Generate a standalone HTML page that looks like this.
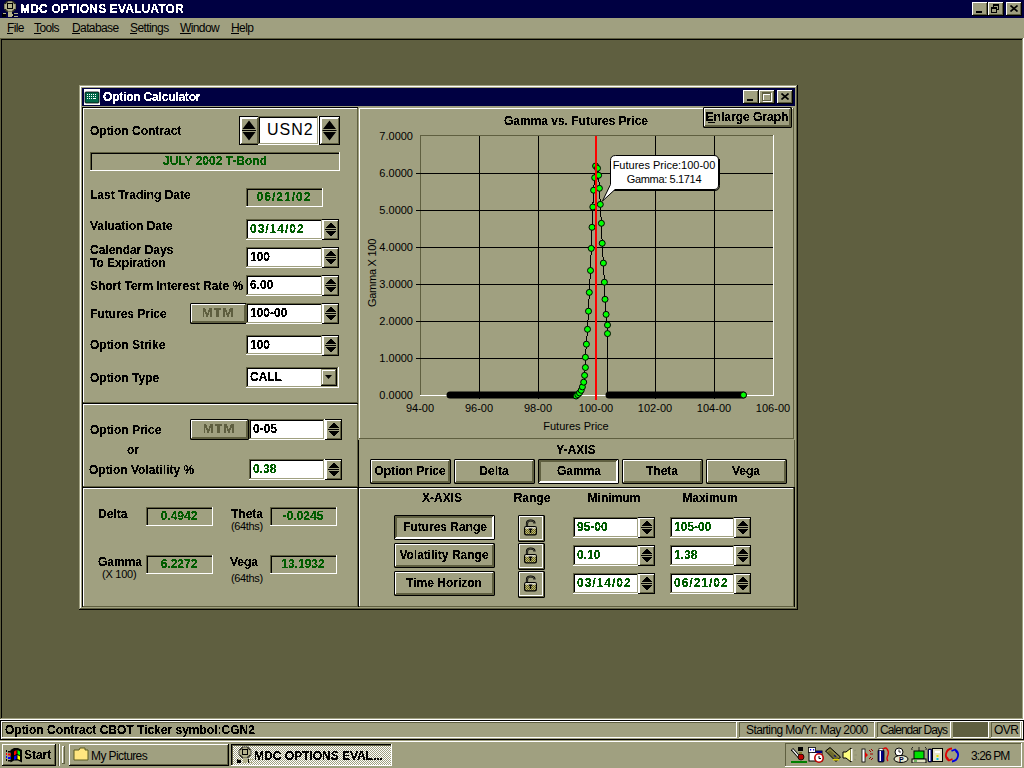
<!DOCTYPE html>
<html><head><meta charset="utf-8"><style>
html,body{margin:0;padding:0;}
body{width:1024px;height:768px;overflow:hidden;position:relative;background:#5f5f40;font-family:"Liberation Sans",sans-serif;}
body div{position:absolute;box-sizing:border-box;}
.t{white-space:pre;line-height:normal;}
.b{filter:url(#crisp);}
svg{position:absolute;}
</style></head><body>
<svg width="0" height="0" style="position:absolute;left:0;top:0"><filter id="crisp" x="0" y="0" width="100%" height="100%"><feComponentTransfer><feFuncA type="discrete" tableValues="0 0 1 1 1"/></feComponentTransfer></filter></svg>
<div style="left:0px;top:0px;width:1024px;height:18px;background:#000042"></div>
<div class="t b" style="left:20px;top:2px;font-size:12px;font-weight:bold;color:#ffffff;letter-spacing:0.15px">MDC OPTIONS EVALUATOR</div>
<svg style="left:0px;top:0px" width="20" height="18" viewBox="0 0 20 18"><path d="M7 1 H13 L16 4 V9 L13 12 H7 L4 9 V4 Z" fill="#b4b28c" stroke="#000" stroke-width="0.6"/><rect x="7.5" y="3.5" width="5" height="5" fill="none" stroke="#000" stroke-width="1"/><path d="M5 4 L8 1.5 M12 1.5 L15 4 M5 9 L8 11.5 M12 11.5 L15 9" stroke="#000" stroke-width="0.9"/><rect x="8" y="12" width="4" height="5" fill="#b4b28c"/><rect x="2" y="13" width="4" height="4" fill="#000"/><rect x="3" y="13" width="3" height="1" fill="#b4b28c"/><rect x="12" y="14" width="2" height="2" fill="#b4b28c"/><rect x="14" y="13" width="4" height="1" fill="#b4b28c"/><rect x="14" y="16" width="4" height="1" fill="#b4b28c"/><rect x="13" y="13" width="1" height="4" fill="#000"/></svg>
<div style="left:972px;top:2px;width:16px;height:14px;background:#a0a080"></div>
<div style="left:972px;top:2px;width:16px;height:1px;background:#ffffff"></div>
<div style="left:972px;top:2px;width:1px;height:14px;background:#ffffff"></div>
<div style="left:972px;top:15px;width:16px;height:1px;background:#000000"></div>
<div style="left:987px;top:2px;width:1px;height:14px;background:#000000"></div>
<div style="left:973px;top:3px;width:14px;height:1px;background:#a0a080"></div>
<div style="left:973px;top:3px;width:1px;height:12px;background:#a0a080"></div>
<div style="left:973px;top:14px;width:14px;height:1px;background:#5f5f40"></div>
<div style="left:986px;top:3px;width:1px;height:12px;background:#5f5f40"></div>
<div style="left:976px;top:11px;width:6px;height:2px;background:#000000"></div>
<div style="left:988px;top:2px;width:16px;height:14px;background:#a0a080"></div>
<div style="left:988px;top:2px;width:16px;height:1px;background:#ffffff"></div>
<div style="left:988px;top:2px;width:1px;height:14px;background:#ffffff"></div>
<div style="left:988px;top:15px;width:16px;height:1px;background:#000000"></div>
<div style="left:1003px;top:2px;width:1px;height:14px;background:#000000"></div>
<div style="left:989px;top:3px;width:14px;height:1px;background:#a0a080"></div>
<div style="left:989px;top:3px;width:1px;height:12px;background:#a0a080"></div>
<div style="left:989px;top:14px;width:14px;height:1px;background:#5f5f40"></div>
<div style="left:1002px;top:3px;width:1px;height:12px;background:#5f5f40"></div>
<div style="left:993px;top:4px;width:6px;height:6px;border:1px solid #000;border-top-width:2px"></div>
<div style="left:991px;top:7px;width:6px;height:6px;border:1px solid #000;border-top-width:2px;background:#a0a080"></div>
<div style="left:1006px;top:2px;width:16px;height:14px;background:#a0a080"></div>
<div style="left:1006px;top:2px;width:16px;height:1px;background:#ffffff"></div>
<div style="left:1006px;top:2px;width:1px;height:14px;background:#ffffff"></div>
<div style="left:1006px;top:15px;width:16px;height:1px;background:#000000"></div>
<div style="left:1021px;top:2px;width:1px;height:14px;background:#000000"></div>
<div style="left:1007px;top:3px;width:14px;height:1px;background:#a0a080"></div>
<div style="left:1007px;top:3px;width:1px;height:12px;background:#a0a080"></div>
<div style="left:1007px;top:14px;width:14px;height:1px;background:#5f5f40"></div>
<div style="left:1020px;top:3px;width:1px;height:12px;background:#5f5f40"></div>
<svg style="left:1010px;top:5px" width="8" height="7" viewBox="0 0 8 7"><path d="M0.5 0.5 L7.5 6.5 M7.5 0.5 L0.5 6.5" stroke="#000" stroke-width="1.6"/></svg>
<div style="left:0px;top:18px;width:1024px;height:20px;background:#a0a080"></div>
<div class="t" style="left:7px;top:21px;font-size:12px;font-weight:normal;color:#000000;letter-spacing:-0.6px">File</div>
<div class="t" style="left:34px;top:21px;font-size:12px;font-weight:normal;color:#000000;letter-spacing:-0.6px">Tools</div>
<div class="t" style="left:72px;top:21px;font-size:12px;font-weight:normal;color:#000000;letter-spacing:-0.6px">Database</div>
<div class="t" style="left:130px;top:21px;font-size:12px;font-weight:normal;color:#000000;letter-spacing:-0.6px">Settings</div>
<div class="t" style="left:180px;top:21px;font-size:12px;font-weight:normal;color:#000000;letter-spacing:-0.6px">Window</div>
<div class="t" style="left:231px;top:21px;font-size:12px;font-weight:normal;color:#000000;letter-spacing:-0.6px">Help</div>
<div style="left:7px;top:33px;width:6px;height:1px;background:#000000"></div>
<div style="left:34px;top:33px;width:7px;height:1px;background:#000000"></div>
<div style="left:72px;top:33px;width:8px;height:1px;background:#000000"></div>
<div style="left:130px;top:33px;width:7px;height:1px;background:#000000"></div>
<div style="left:180px;top:33px;width:11px;height:1px;background:#000000"></div>
<div style="left:231px;top:33px;width:8px;height:1px;background:#000000"></div>
<div style="left:0px;top:38px;width:1024px;height:1px;background:#5f5f40"></div>
<div style="left:0px;top:38px;width:1px;height:681px;background:#5f5f40"></div>
<div style="left:1px;top:39px;width:1022px;height:1px;background:#000000"></div>
<div style="left:1px;top:39px;width:1px;height:679px;background:#000000"></div>
<div style="left:1023px;top:38px;width:1px;height:682px;background:#ffffff"></div>
<div style="left:1022px;top:39px;width:1px;height:680px;background:#a0a080"></div>
<div style="left:0px;top:719px;width:1024px;height:1px;background:#ffffff"></div>
<div style="left:1px;top:718px;width:1022px;height:1px;background:#a0a080"></div>
<div style="left:79px;top:85px;width:719px;height:525px;background:#a0a080"></div>
<div style="left:79px;top:85px;width:719px;height:1px;background:#a0a080"></div>
<div style="left:79px;top:85px;width:1px;height:525px;background:#a0a080"></div>
<div style="left:79px;top:609px;width:719px;height:1px;background:#000000"></div>
<div style="left:797px;top:85px;width:1px;height:525px;background:#000000"></div>
<div style="left:80px;top:86px;width:717px;height:1px;background:#ffffff"></div>
<div style="left:80px;top:86px;width:1px;height:523px;background:#ffffff"></div>
<div style="left:80px;top:608px;width:717px;height:1px;background:#5f5f40"></div>
<div style="left:796px;top:86px;width:1px;height:523px;background:#5f5f40"></div>
<div style="left:82px;top:88px;width:713px;height:18px;background:#000042"></div>
<div class="t b" style="left:103px;top:90px;font-size:12px;font-weight:bold;color:#ffffff;letter-spacing:-0.2px">Option Calculator</div>
<svg style="left:84px;top:89px" width="16" height="16" viewBox="0 0 16 16"><rect x="0" y="0" width="16" height="16" fill="#fff"/><rect x="1" y="3" width="14" height="11" rx="1" fill="#006848" stroke="#000" stroke-width="0.8"/><g fill="#fff"><rect x="3" y="5" width="1" height="1"/><rect x="5" y="5" width="1" height="1"/><rect x="7" y="5" width="1" height="1"/><rect x="9" y="5" width="1" height="1"/><rect x="11" y="5" width="1" height="1"/><rect x="3" y="7" width="1" height="1"/><rect x="5" y="7" width="1" height="1"/><rect x="7" y="7" width="1" height="1"/><rect x="9" y="7" width="1" height="1"/><rect x="11" y="7" width="1" height="1"/><rect x="3" y="9" width="1" height="1"/><rect x="5" y="9" width="1" height="1"/><rect x="7" y="9" width="1" height="1"/><rect x="9" y="9" width="3" height="1"/></g></svg>
<div style="left:743px;top:90px;width:16px;height:14px;background:#a0a080"></div>
<div style="left:743px;top:90px;width:16px;height:1px;background:#ffffff"></div>
<div style="left:743px;top:90px;width:1px;height:14px;background:#ffffff"></div>
<div style="left:743px;top:103px;width:16px;height:1px;background:#000000"></div>
<div style="left:758px;top:90px;width:1px;height:14px;background:#000000"></div>
<div style="left:744px;top:91px;width:14px;height:1px;background:#a0a080"></div>
<div style="left:744px;top:91px;width:1px;height:12px;background:#a0a080"></div>
<div style="left:744px;top:102px;width:14px;height:1px;background:#5f5f40"></div>
<div style="left:757px;top:91px;width:1px;height:12px;background:#5f5f40"></div>
<div style="left:747px;top:99px;width:6px;height:2px;background:#000000"></div>
<div style="left:759px;top:90px;width:16px;height:14px;background:#a0a080"></div>
<div style="left:759px;top:90px;width:16px;height:1px;background:#ffffff"></div>
<div style="left:759px;top:90px;width:1px;height:14px;background:#ffffff"></div>
<div style="left:759px;top:103px;width:16px;height:1px;background:#000000"></div>
<div style="left:774px;top:90px;width:1px;height:14px;background:#000000"></div>
<div style="left:760px;top:91px;width:14px;height:1px;background:#a0a080"></div>
<div style="left:760px;top:91px;width:1px;height:12px;background:#a0a080"></div>
<div style="left:760px;top:102px;width:14px;height:1px;background:#5f5f40"></div>
<div style="left:773px;top:91px;width:1px;height:12px;background:#5f5f40"></div>
<div style="left:763px;top:93px;width:9px;height:9px;border:1px solid #fff;border-top-width:2px"></div>
<div style="left:762px;top:92px;width:9px;height:9px;border:1px solid #5f5f40;border-top-width:2px"></div>
<div style="left:777px;top:90px;width:16px;height:14px;background:#a0a080"></div>
<div style="left:777px;top:90px;width:16px;height:1px;background:#ffffff"></div>
<div style="left:777px;top:90px;width:1px;height:14px;background:#ffffff"></div>
<div style="left:777px;top:103px;width:16px;height:1px;background:#000000"></div>
<div style="left:792px;top:90px;width:1px;height:14px;background:#000000"></div>
<div style="left:778px;top:91px;width:14px;height:1px;background:#a0a080"></div>
<div style="left:778px;top:91px;width:1px;height:12px;background:#a0a080"></div>
<div style="left:778px;top:102px;width:14px;height:1px;background:#5f5f40"></div>
<div style="left:791px;top:91px;width:1px;height:12px;background:#5f5f40"></div>
<svg style="left:781px;top:93px" width="8" height="7" viewBox="0 0 8 7"><path d="M0.5 0.5 L7.5 6.5 M7.5 0.5 L0.5 6.5" stroke="#000" stroke-width="1.6"/></svg>
<div style="left:82px;top:107px;width:276px;height:1px;background:#000000"></div>
<div style="left:82px;top:107px;width:1px;height:296px;background:#000000"></div>
<div style="left:83px;top:108px;width:274px;height:1px;background:#ffffff"></div>
<div style="left:83px;top:108px;width:1px;height:295px;background:#ffffff"></div>
<div style="left:83px;top:402px;width:275px;height:1px;background:#5f5f40"></div>
<div style="left:357px;top:108px;width:1px;height:295px;background:#5f5f40"></div>
<div style="left:82px;top:403px;width:276px;height:1px;background:#000000"></div>
<div style="left:82px;top:403px;width:1px;height:84px;background:#000000"></div>
<div style="left:83px;top:404px;width:274px;height:1px;background:#ffffff"></div>
<div style="left:83px;top:404px;width:1px;height:83px;background:#ffffff"></div>
<div style="left:83px;top:486px;width:275px;height:1px;background:#5f5f40"></div>
<div style="left:357px;top:404px;width:1px;height:83px;background:#5f5f40"></div>
<div style="left:82px;top:487px;width:276px;height:1px;background:#000000"></div>
<div style="left:82px;top:487px;width:1px;height:120px;background:#000000"></div>
<div style="left:83px;top:488px;width:274px;height:1px;background:#ffffff"></div>
<div style="left:83px;top:488px;width:1px;height:119px;background:#ffffff"></div>
<div style="left:83px;top:606px;width:275px;height:1px;background:#5f5f40"></div>
<div style="left:357px;top:488px;width:1px;height:119px;background:#5f5f40"></div>
<div style="left:359px;top:108px;width:435px;height:1px;background:#ffffff"></div>
<div style="left:359px;top:108px;width:1px;height:331px;background:#ffffff"></div>
<div style="left:359px;top:438px;width:435px;height:1px;background:#5f5f40"></div>
<div style="left:793px;top:108px;width:1px;height:331px;background:#5f5f40"></div>
<div style="left:358px;top:440px;width:1px;height:47px;background:#000000"></div>
<div style="left:794px;top:440px;width:1px;height:47px;background:#5f5f40"></div>
<div style="left:358px;top:487px;width:437px;height:1px;background:#000000"></div>
<div style="left:358px;top:487px;width:1px;height:120px;background:#000000"></div>
<div style="left:359px;top:488px;width:435px;height:1px;background:#ffffff"></div>
<div style="left:359px;top:488px;width:1px;height:118px;background:#ffffff"></div>
<div style="left:359px;top:606px;width:435px;height:1px;background:#5f5f40"></div>
<div style="left:793px;top:488px;width:1px;height:119px;background:#5f5f40"></div>
<div style="left:794px;top:487px;width:1px;height:120px;background:#000000"></div>
<div class="t b" style="left:90px;top:124px;font-size:12px;font-weight:bold;color:#000000;">Option Contract</div>
<div style="left:239px;top:116px;width:20px;height:29px;background:#a0a080"></div>
<div style="left:239px;top:116px;width:20px;height:1px;background:#000000"></div>
<div style="left:239px;top:144px;width:20px;height:1px;background:#000000"></div>
<div style="left:258px;top:116px;width:1px;height:29px;background:#000000"></div>
<div style="left:239px;top:116px;width:1px;height:29px;background:#000000"></div>
<div style="left:240px;top:117px;width:18px;height:1px;background:#ffffff"></div>
<div style="left:240px;top:117px;width:1px;height:27px;background:#ffffff"></div>
<div style="left:241px;top:117px;width:1px;height:26px;background:#ffffff"></div>
<div style="left:240px;top:118px;width:17px;height:1px;background:#ffffff"></div>
<div style="left:241px;top:143px;width:17px;height:1px;background:#5f5f40"></div>
<div style="left:257px;top:118px;width:1px;height:26px;background:#5f5f40"></div>
<svg style="left:0;top:0" width="1024" height="768"><path d="M242.5 129.0 L255.5 129.0 L249.0 120.5 Z M242.5 132.0 L255.5 132.0 L249.0 140.5 Z" fill="#000"/><rect x="242.0" y="130.0" width="14.0" height="1" fill="#000"/></svg>
<div style="left:258px;top:116px;width:61px;height:29px;background:#ffffff"></div>
<div style="left:258px;top:116px;width:61px;height:1px;background:#5f5f40"></div>
<div style="left:258px;top:116px;width:1px;height:29px;background:#5f5f40"></div>
<div style="left:258px;top:144px;width:61px;height:1px;background:#ffffff"></div>
<div style="left:318px;top:116px;width:1px;height:29px;background:#ffffff"></div>
<div style="left:259px;top:117px;width:59px;height:1px;background:#000000"></div>
<div style="left:259px;top:117px;width:1px;height:27px;background:#000000"></div>
<div style="left:259px;top:143px;width:59px;height:1px;background:#a0a080"></div>
<div style="left:317px;top:117px;width:1px;height:27px;background:#a0a080"></div>
<div class="t b" style="left:262px;top:119px;font-size:12px;font-weight:bold;color:#000000;"></div>
<div class="t" style="left:267px;top:121px;font-size:16px;font-weight:normal;color:#000000;letter-spacing:1px">USN2</div>
<div style="left:319px;top:116px;width:21px;height:29px;background:#a0a080"></div>
<div style="left:319px;top:116px;width:21px;height:1px;background:#000000"></div>
<div style="left:319px;top:144px;width:21px;height:1px;background:#000000"></div>
<div style="left:339px;top:116px;width:1px;height:29px;background:#000000"></div>
<div style="left:319px;top:116px;width:1px;height:29px;background:#000000"></div>
<div style="left:320px;top:117px;width:19px;height:1px;background:#ffffff"></div>
<div style="left:320px;top:117px;width:1px;height:27px;background:#ffffff"></div>
<div style="left:321px;top:117px;width:1px;height:26px;background:#ffffff"></div>
<div style="left:320px;top:118px;width:18px;height:1px;background:#ffffff"></div>
<div style="left:321px;top:143px;width:18px;height:1px;background:#5f5f40"></div>
<div style="left:338px;top:118px;width:1px;height:26px;background:#5f5f40"></div>
<svg style="left:0;top:0" width="1024" height="768"><path d="M323.0 129.0 L336.0 129.0 L329.5 120.5 Z M323.0 132.0 L336.0 132.0 L329.5 140.5 Z" fill="#000"/><rect x="322.5" y="130.0" width="14.0" height="1" fill="#000"/></svg>
<div style="left:90px;top:152px;width:250px;height:1px;background:#5f5f40"></div>
<div style="left:90px;top:152px;width:1px;height:19px;background:#5f5f40"></div>
<div style="left:91px;top:153px;width:248px;height:1px;background:#000000"></div>
<div style="left:91px;top:153px;width:1px;height:17px;background:#000000"></div>
<div style="left:90px;top:170px;width:250px;height:1px;background:#ffffff"></div>
<div style="left:339px;top:152px;width:1px;height:19px;background:#ffffff"></div>
<div class="t b" style="left:15px;width:400px;text-align:center;top:154px;font-size:12px;font-weight:bold;color:#005c00;">JULY 2002 T-Bond</div>
<div class="t b" style="left:90px;top:188px;font-size:12px;font-weight:bold;color:#000000;">Last Trading Date</div>
<div style="left:246px;top:188px;width:77px;height:1px;background:#5f5f40"></div>
<div style="left:246px;top:188px;width:1px;height:19px;background:#5f5f40"></div>
<div style="left:247px;top:189px;width:75px;height:1px;background:#000000"></div>
<div style="left:247px;top:189px;width:1px;height:17px;background:#000000"></div>
<div style="left:246px;top:206px;width:77px;height:1px;background:#ffffff"></div>
<div style="left:322px;top:188px;width:1px;height:19px;background:#ffffff"></div>
<div class="t b" style="left:84px;width:400px;text-align:center;top:190px;font-size:12px;font-weight:bold;color:#005c00;letter-spacing:1px">06/21/02</div>
<div class="t b" style="left:90px;top:219px;font-size:12px;font-weight:bold;color:#000000;">Valuation Date</div>
<div style="left:246px;top:219px;width:77px;height:21px;background:#ffffff"></div>
<div style="left:246px;top:219px;width:77px;height:1px;background:#5f5f40"></div>
<div style="left:246px;top:219px;width:1px;height:21px;background:#5f5f40"></div>
<div style="left:246px;top:239px;width:77px;height:1px;background:#ffffff"></div>
<div style="left:322px;top:219px;width:1px;height:21px;background:#ffffff"></div>
<div style="left:247px;top:220px;width:75px;height:1px;background:#000000"></div>
<div style="left:247px;top:220px;width:1px;height:19px;background:#000000"></div>
<div style="left:247px;top:238px;width:75px;height:1px;background:#a0a080"></div>
<div style="left:321px;top:220px;width:1px;height:19px;background:#a0a080"></div>
<div class="t b" style="left:250px;top:222px;font-size:12px;font-weight:bold;color:#005c00;letter-spacing:1px">03/14/02</div>
<div style="left:322px;top:219px;width:17px;height:21px;background:#a0a080"></div>
<div style="left:322px;top:219px;width:17px;height:1px;background:#000000"></div>
<div style="left:322px;top:239px;width:17px;height:1px;background:#000000"></div>
<div style="left:338px;top:219px;width:1px;height:21px;background:#000000"></div>
<div style="left:322px;top:220px;width:16px;height:1px;background:#ffffff"></div>
<div style="left:322px;top:220px;width:1px;height:19px;background:#ffffff"></div>
<div style="left:323px;top:220px;width:1px;height:19px;background:#ffffff"></div>
<div style="left:324px;top:238px;width:14px;height:1px;background:#5f5f40"></div>
<div style="left:337px;top:221px;width:1px;height:18px;background:#5f5f40"></div>
<svg style="left:0;top:0" width="1024" height="768" shape-rendering="crispEdges"><g fill="#000"><rect x="329.5" y="223" width="2" height="1"/><rect x="329.5" y="235" width="2" height="1"/><rect x="328.5" y="224" width="4" height="1"/><rect x="328.5" y="234" width="4" height="1"/><rect x="327.5" y="225" width="6" height="1"/><rect x="327.5" y="233" width="6" height="1"/><rect x="326.5" y="226" width="8" height="1"/><rect x="326.5" y="232" width="8" height="1"/><rect x="325.5" y="227" width="10" height="1"/><rect x="325.5" y="231" width="10" height="1"/><rect x="325.0" y="229" width="11" height="1"/></g></svg>
<div class="t b" style="left:90px;top:243px;font-size:12px;font-weight:bold;color:#000000;">Calendar Days</div>
<div class="t b" style="left:90px;top:256px;font-size:12px;font-weight:bold;color:#000000;">To Expiration</div>
<div style="left:246px;top:247px;width:77px;height:21px;background:#ffffff"></div>
<div style="left:246px;top:247px;width:77px;height:1px;background:#5f5f40"></div>
<div style="left:246px;top:247px;width:1px;height:21px;background:#5f5f40"></div>
<div style="left:246px;top:267px;width:77px;height:1px;background:#ffffff"></div>
<div style="left:322px;top:247px;width:1px;height:21px;background:#ffffff"></div>
<div style="left:247px;top:248px;width:75px;height:1px;background:#000000"></div>
<div style="left:247px;top:248px;width:1px;height:19px;background:#000000"></div>
<div style="left:247px;top:266px;width:75px;height:1px;background:#a0a080"></div>
<div style="left:321px;top:248px;width:1px;height:19px;background:#a0a080"></div>
<div class="t b" style="left:250px;top:250px;font-size:12px;font-weight:bold;color:#000000;">100</div>
<div style="left:322px;top:247px;width:17px;height:21px;background:#a0a080"></div>
<div style="left:322px;top:247px;width:17px;height:1px;background:#000000"></div>
<div style="left:322px;top:267px;width:17px;height:1px;background:#000000"></div>
<div style="left:338px;top:247px;width:1px;height:21px;background:#000000"></div>
<div style="left:322px;top:248px;width:16px;height:1px;background:#ffffff"></div>
<div style="left:322px;top:248px;width:1px;height:19px;background:#ffffff"></div>
<div style="left:323px;top:248px;width:1px;height:19px;background:#ffffff"></div>
<div style="left:324px;top:266px;width:14px;height:1px;background:#5f5f40"></div>
<div style="left:337px;top:249px;width:1px;height:18px;background:#5f5f40"></div>
<svg style="left:0;top:0" width="1024" height="768" shape-rendering="crispEdges"><g fill="#000"><rect x="329.5" y="251" width="2" height="1"/><rect x="329.5" y="263" width="2" height="1"/><rect x="328.5" y="252" width="4" height="1"/><rect x="328.5" y="262" width="4" height="1"/><rect x="327.5" y="253" width="6" height="1"/><rect x="327.5" y="261" width="6" height="1"/><rect x="326.5" y="254" width="8" height="1"/><rect x="326.5" y="260" width="8" height="1"/><rect x="325.5" y="255" width="10" height="1"/><rect x="325.5" y="259" width="10" height="1"/><rect x="325.0" y="257" width="11" height="1"/></g></svg>
<div class="t b" style="left:90px;top:279px;font-size:12px;font-weight:bold;color:#000000;">Short Term Interest Rate %</div>
<div style="left:246px;top:275px;width:77px;height:21px;background:#ffffff"></div>
<div style="left:246px;top:275px;width:77px;height:1px;background:#5f5f40"></div>
<div style="left:246px;top:275px;width:1px;height:21px;background:#5f5f40"></div>
<div style="left:246px;top:295px;width:77px;height:1px;background:#ffffff"></div>
<div style="left:322px;top:275px;width:1px;height:21px;background:#ffffff"></div>
<div style="left:247px;top:276px;width:75px;height:1px;background:#000000"></div>
<div style="left:247px;top:276px;width:1px;height:19px;background:#000000"></div>
<div style="left:247px;top:294px;width:75px;height:1px;background:#a0a080"></div>
<div style="left:321px;top:276px;width:1px;height:19px;background:#a0a080"></div>
<div class="t b" style="left:250px;top:278px;font-size:12px;font-weight:bold;color:#000000;">6.00</div>
<div style="left:322px;top:275px;width:17px;height:21px;background:#a0a080"></div>
<div style="left:322px;top:275px;width:17px;height:1px;background:#000000"></div>
<div style="left:322px;top:295px;width:17px;height:1px;background:#000000"></div>
<div style="left:338px;top:275px;width:1px;height:21px;background:#000000"></div>
<div style="left:322px;top:276px;width:16px;height:1px;background:#ffffff"></div>
<div style="left:322px;top:276px;width:1px;height:19px;background:#ffffff"></div>
<div style="left:323px;top:276px;width:1px;height:19px;background:#ffffff"></div>
<div style="left:324px;top:294px;width:14px;height:1px;background:#5f5f40"></div>
<div style="left:337px;top:277px;width:1px;height:18px;background:#5f5f40"></div>
<svg style="left:0;top:0" width="1024" height="768" shape-rendering="crispEdges"><g fill="#000"><rect x="329.5" y="279" width="2" height="1"/><rect x="329.5" y="291" width="2" height="1"/><rect x="328.5" y="280" width="4" height="1"/><rect x="328.5" y="290" width="4" height="1"/><rect x="327.5" y="281" width="6" height="1"/><rect x="327.5" y="289" width="6" height="1"/><rect x="326.5" y="282" width="8" height="1"/><rect x="326.5" y="288" width="8" height="1"/><rect x="325.5" y="283" width="10" height="1"/><rect x="325.5" y="287" width="10" height="1"/><rect x="325.0" y="285" width="11" height="1"/></g></svg>
<div class="t b" style="left:90px;top:307px;font-size:12px;font-weight:bold;color:#000000;">Futures Price</div>
<div style="left:190px;top:303px;width:57px;height:21px;background:#a0a080"></div>
<div style="left:190px;top:303px;width:57px;height:21px;border:1px solid #000;border-radius:1px"></div>
<div style="left:191px;top:304px;width:55px;height:1px;background:#ffffff"></div>
<div style="left:191px;top:304px;width:1px;height:19px;background:#ffffff"></div>
<div style="left:191px;top:322px;width:55px;height:1px;background:#5f5f40"></div>
<div style="left:245px;top:304px;width:1px;height:19px;background:#5f5f40"></div>
<div style="left:192px;top:321px;width:54px;height:1px;background:#5f5f40"></div>
<div style="left:244px;top:305px;width:1px;height:17px;background:#5f5f40"></div>
<div class="t b" style="left:18px;width:400px;text-align:center;top:305px;font-size:13px;font-weight:bold;color:#5f5f40;letter-spacing:1px">MTM</div>
<div style="left:246px;top:303px;width:77px;height:21px;background:#ffffff"></div>
<div style="left:246px;top:303px;width:77px;height:1px;background:#5f5f40"></div>
<div style="left:246px;top:303px;width:1px;height:21px;background:#5f5f40"></div>
<div style="left:246px;top:323px;width:77px;height:1px;background:#ffffff"></div>
<div style="left:322px;top:303px;width:1px;height:21px;background:#ffffff"></div>
<div style="left:247px;top:304px;width:75px;height:1px;background:#000000"></div>
<div style="left:247px;top:304px;width:1px;height:19px;background:#000000"></div>
<div style="left:247px;top:322px;width:75px;height:1px;background:#a0a080"></div>
<div style="left:321px;top:304px;width:1px;height:19px;background:#a0a080"></div>
<div class="t b" style="left:250px;top:306px;font-size:12px;font-weight:bold;color:#000000;">100-00</div>
<div style="left:322px;top:303px;width:17px;height:21px;background:#a0a080"></div>
<div style="left:322px;top:303px;width:17px;height:1px;background:#000000"></div>
<div style="left:322px;top:323px;width:17px;height:1px;background:#000000"></div>
<div style="left:338px;top:303px;width:1px;height:21px;background:#000000"></div>
<div style="left:322px;top:304px;width:16px;height:1px;background:#ffffff"></div>
<div style="left:322px;top:304px;width:1px;height:19px;background:#ffffff"></div>
<div style="left:323px;top:304px;width:1px;height:19px;background:#ffffff"></div>
<div style="left:324px;top:322px;width:14px;height:1px;background:#5f5f40"></div>
<div style="left:337px;top:305px;width:1px;height:18px;background:#5f5f40"></div>
<svg style="left:0;top:0" width="1024" height="768" shape-rendering="crispEdges"><g fill="#000"><rect x="329.5" y="307" width="2" height="1"/><rect x="329.5" y="319" width="2" height="1"/><rect x="328.5" y="308" width="4" height="1"/><rect x="328.5" y="318" width="4" height="1"/><rect x="327.5" y="309" width="6" height="1"/><rect x="327.5" y="317" width="6" height="1"/><rect x="326.5" y="310" width="8" height="1"/><rect x="326.5" y="316" width="8" height="1"/><rect x="325.5" y="311" width="10" height="1"/><rect x="325.5" y="315" width="10" height="1"/><rect x="325.0" y="313" width="11" height="1"/></g></svg>
<div class="t b" style="left:90px;top:338px;font-size:12px;font-weight:bold;color:#000000;">Option Strike</div>
<div style="left:246px;top:335px;width:77px;height:20px;background:#ffffff"></div>
<div style="left:246px;top:335px;width:77px;height:1px;background:#5f5f40"></div>
<div style="left:246px;top:335px;width:1px;height:20px;background:#5f5f40"></div>
<div style="left:246px;top:354px;width:77px;height:1px;background:#ffffff"></div>
<div style="left:322px;top:335px;width:1px;height:20px;background:#ffffff"></div>
<div style="left:247px;top:336px;width:75px;height:1px;background:#000000"></div>
<div style="left:247px;top:336px;width:1px;height:18px;background:#000000"></div>
<div style="left:247px;top:353px;width:75px;height:1px;background:#a0a080"></div>
<div style="left:321px;top:336px;width:1px;height:18px;background:#a0a080"></div>
<div class="t b" style="left:250px;top:338px;font-size:12px;font-weight:bold;color:#000000;">100</div>
<div style="left:322px;top:335px;width:17px;height:21px;background:#a0a080"></div>
<div style="left:322px;top:335px;width:17px;height:1px;background:#000000"></div>
<div style="left:322px;top:355px;width:17px;height:1px;background:#000000"></div>
<div style="left:338px;top:335px;width:1px;height:21px;background:#000000"></div>
<div style="left:322px;top:336px;width:16px;height:1px;background:#ffffff"></div>
<div style="left:322px;top:336px;width:1px;height:19px;background:#ffffff"></div>
<div style="left:323px;top:336px;width:1px;height:19px;background:#ffffff"></div>
<div style="left:324px;top:354px;width:14px;height:1px;background:#5f5f40"></div>
<div style="left:337px;top:337px;width:1px;height:18px;background:#5f5f40"></div>
<svg style="left:0;top:0" width="1024" height="768" shape-rendering="crispEdges"><g fill="#000"><rect x="329.5" y="339" width="2" height="1"/><rect x="329.5" y="351" width="2" height="1"/><rect x="328.5" y="340" width="4" height="1"/><rect x="328.5" y="350" width="4" height="1"/><rect x="327.5" y="341" width="6" height="1"/><rect x="327.5" y="349" width="6" height="1"/><rect x="326.5" y="342" width="8" height="1"/><rect x="326.5" y="348" width="8" height="1"/><rect x="325.5" y="343" width="10" height="1"/><rect x="325.5" y="347" width="10" height="1"/><rect x="325.0" y="345" width="11" height="1"/></g></svg>
<div class="t b" style="left:90px;top:371px;font-size:12px;font-weight:bold;color:#000000;">Option Type</div>
<div style="left:246px;top:367px;width:93px;height:21px;background:#ffffff"></div>
<div style="left:246px;top:367px;width:93px;height:1px;background:#5f5f40"></div>
<div style="left:246px;top:367px;width:1px;height:21px;background:#5f5f40"></div>
<div style="left:246px;top:387px;width:93px;height:1px;background:#ffffff"></div>
<div style="left:338px;top:367px;width:1px;height:21px;background:#ffffff"></div>
<div style="left:247px;top:368px;width:91px;height:1px;background:#000000"></div>
<div style="left:247px;top:368px;width:1px;height:19px;background:#000000"></div>
<div style="left:247px;top:386px;width:91px;height:1px;background:#a0a080"></div>
<div style="left:337px;top:368px;width:1px;height:19px;background:#a0a080"></div>
<div class="t b" style="left:250px;top:370px;font-size:12px;font-weight:bold;color:#000000;">CALL</div>
<div style="left:321px;top:369px;width:16px;height:17px;background:#a0a080"></div>
<div style="left:321px;top:369px;width:16px;height:1px;background:#a0a080"></div>
<div style="left:321px;top:369px;width:1px;height:17px;background:#a0a080"></div>
<div style="left:321px;top:385px;width:16px;height:1px;background:#000000"></div>
<div style="left:336px;top:369px;width:1px;height:17px;background:#000000"></div>
<div style="left:322px;top:370px;width:14px;height:1px;background:#ffffff"></div>
<div style="left:322px;top:370px;width:1px;height:15px;background:#ffffff"></div>
<div style="left:322px;top:384px;width:14px;height:1px;background:#5f5f40"></div>
<div style="left:335px;top:370px;width:1px;height:15px;background:#5f5f40"></div>
<svg style="left:325px;top:375px" width="8" height="5"><path d="M0 0 L7 0 L3.5 4 Z" fill="#000"/></svg>
<div class="t b" style="left:90px;top:423px;font-size:12px;font-weight:bold;color:#000000;">Option Price</div>
<div style="left:190px;top:419px;width:59px;height:21px;background:#a0a080"></div>
<div style="left:190px;top:419px;width:59px;height:21px;border:1px solid #000;border-radius:1px"></div>
<div style="left:191px;top:420px;width:57px;height:1px;background:#ffffff"></div>
<div style="left:191px;top:420px;width:1px;height:19px;background:#ffffff"></div>
<div style="left:191px;top:438px;width:57px;height:1px;background:#5f5f40"></div>
<div style="left:247px;top:420px;width:1px;height:19px;background:#5f5f40"></div>
<div style="left:192px;top:437px;width:56px;height:1px;background:#5f5f40"></div>
<div style="left:246px;top:421px;width:1px;height:17px;background:#5f5f40"></div>
<div class="t b" style="left:19px;width:400px;text-align:center;top:421px;font-size:13px;font-weight:bold;color:#5f5f40;letter-spacing:1px">MTM</div>
<div style="left:249px;top:419px;width:76px;height:21px;background:#ffffff"></div>
<div style="left:249px;top:419px;width:76px;height:1px;background:#5f5f40"></div>
<div style="left:249px;top:419px;width:1px;height:21px;background:#5f5f40"></div>
<div style="left:249px;top:439px;width:76px;height:1px;background:#ffffff"></div>
<div style="left:324px;top:419px;width:1px;height:21px;background:#ffffff"></div>
<div style="left:250px;top:420px;width:74px;height:1px;background:#000000"></div>
<div style="left:250px;top:420px;width:1px;height:19px;background:#000000"></div>
<div style="left:250px;top:438px;width:74px;height:1px;background:#a0a080"></div>
<div style="left:323px;top:420px;width:1px;height:19px;background:#a0a080"></div>
<div class="t b" style="left:253px;top:422px;font-size:12px;font-weight:bold;color:#000000;">0-05</div>
<div style="left:325px;top:419px;width:17px;height:21px;background:#a0a080"></div>
<div style="left:325px;top:419px;width:17px;height:1px;background:#000000"></div>
<div style="left:325px;top:439px;width:17px;height:1px;background:#000000"></div>
<div style="left:341px;top:419px;width:1px;height:21px;background:#000000"></div>
<div style="left:325px;top:420px;width:16px;height:1px;background:#ffffff"></div>
<div style="left:325px;top:420px;width:1px;height:19px;background:#ffffff"></div>
<div style="left:326px;top:420px;width:1px;height:19px;background:#ffffff"></div>
<div style="left:327px;top:438px;width:14px;height:1px;background:#5f5f40"></div>
<div style="left:340px;top:421px;width:1px;height:18px;background:#5f5f40"></div>
<svg style="left:0;top:0" width="1024" height="768" shape-rendering="crispEdges"><g fill="#000"><rect x="332.5" y="423" width="2" height="1"/><rect x="332.5" y="435" width="2" height="1"/><rect x="331.5" y="424" width="4" height="1"/><rect x="331.5" y="434" width="4" height="1"/><rect x="330.5" y="425" width="6" height="1"/><rect x="330.5" y="433" width="6" height="1"/><rect x="329.5" y="426" width="8" height="1"/><rect x="329.5" y="432" width="8" height="1"/><rect x="328.5" y="427" width="10" height="1"/><rect x="328.5" y="431" width="10" height="1"/><rect x="328.0" y="429" width="11" height="1"/></g></svg>
<div class="t b" style="left:127px;top:443px;font-size:12px;font-weight:bold;color:#000000;">or</div>
<div class="t b" style="left:89px;top:463px;font-size:12px;font-weight:bold;color:#000000;">Option Volatility %</div>
<div style="left:249px;top:459px;width:76px;height:21px;background:#ffffff"></div>
<div style="left:249px;top:459px;width:76px;height:1px;background:#5f5f40"></div>
<div style="left:249px;top:459px;width:1px;height:21px;background:#5f5f40"></div>
<div style="left:249px;top:479px;width:76px;height:1px;background:#ffffff"></div>
<div style="left:324px;top:459px;width:1px;height:21px;background:#ffffff"></div>
<div style="left:250px;top:460px;width:74px;height:1px;background:#000000"></div>
<div style="left:250px;top:460px;width:1px;height:19px;background:#000000"></div>
<div style="left:250px;top:478px;width:74px;height:1px;background:#a0a080"></div>
<div style="left:323px;top:460px;width:1px;height:19px;background:#a0a080"></div>
<div class="t b" style="left:253px;top:462px;font-size:12px;font-weight:bold;color:#005c00;">0.38</div>
<div style="left:325px;top:459px;width:17px;height:21px;background:#a0a080"></div>
<div style="left:325px;top:459px;width:17px;height:1px;background:#000000"></div>
<div style="left:325px;top:479px;width:17px;height:1px;background:#000000"></div>
<div style="left:341px;top:459px;width:1px;height:21px;background:#000000"></div>
<div style="left:325px;top:460px;width:16px;height:1px;background:#ffffff"></div>
<div style="left:325px;top:460px;width:1px;height:19px;background:#ffffff"></div>
<div style="left:326px;top:460px;width:1px;height:19px;background:#ffffff"></div>
<div style="left:327px;top:478px;width:14px;height:1px;background:#5f5f40"></div>
<div style="left:340px;top:461px;width:1px;height:18px;background:#5f5f40"></div>
<svg style="left:0;top:0" width="1024" height="768" shape-rendering="crispEdges"><g fill="#000"><rect x="332.5" y="463" width="2" height="1"/><rect x="332.5" y="475" width="2" height="1"/><rect x="331.5" y="464" width="4" height="1"/><rect x="331.5" y="474" width="4" height="1"/><rect x="330.5" y="465" width="6" height="1"/><rect x="330.5" y="473" width="6" height="1"/><rect x="329.5" y="466" width="8" height="1"/><rect x="329.5" y="472" width="8" height="1"/><rect x="328.5" y="467" width="10" height="1"/><rect x="328.5" y="471" width="10" height="1"/><rect x="328.0" y="469" width="11" height="1"/></g></svg>
<div class="t b" style="left:98px;top:507px;font-size:12px;font-weight:bold;color:#000000;">Delta</div>
<div style="left:146px;top:507px;width:67px;height:1px;background:#5f5f40"></div>
<div style="left:146px;top:507px;width:1px;height:19px;background:#5f5f40"></div>
<div style="left:147px;top:508px;width:65px;height:1px;background:#000000"></div>
<div style="left:147px;top:508px;width:1px;height:17px;background:#000000"></div>
<div style="left:146px;top:525px;width:67px;height:1px;background:#ffffff"></div>
<div style="left:212px;top:507px;width:1px;height:19px;background:#ffffff"></div>
<div class="t b" style="left:-21px;width:400px;text-align:center;top:509px;font-size:12px;font-weight:bold;color:#005c00;">0.4942</div>
<div class="t b" style="left:231px;top:507px;font-size:12px;font-weight:bold;color:#000000;">Theta</div>
<div class="t" style="left:231px;top:520px;font-size:11px;font-weight:normal;color:#000000;letter-spacing:-0.35px">(64ths)</div>
<div style="left:270px;top:507px;width:67px;height:1px;background:#5f5f40"></div>
<div style="left:270px;top:507px;width:1px;height:19px;background:#5f5f40"></div>
<div style="left:271px;top:508px;width:65px;height:1px;background:#000000"></div>
<div style="left:271px;top:508px;width:1px;height:17px;background:#000000"></div>
<div style="left:270px;top:525px;width:67px;height:1px;background:#ffffff"></div>
<div style="left:336px;top:507px;width:1px;height:19px;background:#ffffff"></div>
<div class="t b" style="left:103px;width:400px;text-align:center;top:509px;font-size:12px;font-weight:bold;color:#005c00;">-0.0245</div>
<div class="t b" style="left:98px;top:555px;font-size:12px;font-weight:bold;color:#000000;">Gamma</div>
<div class="t" style="left:102px;top:568px;font-size:11px;font-weight:normal;color:#000000;letter-spacing:-0.25px">(X 100)</div>
<div style="left:146px;top:555px;width:67px;height:1px;background:#5f5f40"></div>
<div style="left:146px;top:555px;width:1px;height:19px;background:#5f5f40"></div>
<div style="left:147px;top:556px;width:65px;height:1px;background:#000000"></div>
<div style="left:147px;top:556px;width:1px;height:17px;background:#000000"></div>
<div style="left:146px;top:573px;width:67px;height:1px;background:#ffffff"></div>
<div style="left:212px;top:555px;width:1px;height:19px;background:#ffffff"></div>
<div class="t b" style="left:-21px;width:400px;text-align:center;top:557px;font-size:12px;font-weight:bold;color:#005c00;">6.2272</div>
<div class="t b" style="left:230px;top:555px;font-size:12px;font-weight:bold;color:#000000;">Vega</div>
<div class="t" style="left:231px;top:572px;font-size:11px;font-weight:normal;color:#000000;letter-spacing:-0.35px">(64ths)</div>
<div style="left:270px;top:555px;width:67px;height:1px;background:#5f5f40"></div>
<div style="left:270px;top:555px;width:1px;height:19px;background:#5f5f40"></div>
<div style="left:271px;top:556px;width:65px;height:1px;background:#000000"></div>
<div style="left:271px;top:556px;width:1px;height:17px;background:#000000"></div>
<div style="left:270px;top:573px;width:67px;height:1px;background:#ffffff"></div>
<div style="left:336px;top:555px;width:1px;height:19px;background:#ffffff"></div>
<div class="t b" style="left:103px;width:400px;text-align:center;top:557px;font-size:12px;font-weight:bold;color:#005c00;">13.1932</div>
<div style="left:703px;top:107px;width:89px;height:21px;background:#a0a080"></div>
<div style="left:703px;top:107px;width:89px;height:21px;border:1px solid #000;border-radius:1px"></div>
<div style="left:704px;top:108px;width:87px;height:1px;background:#ffffff"></div>
<div style="left:704px;top:108px;width:1px;height:19px;background:#ffffff"></div>
<div style="left:704px;top:126px;width:87px;height:1px;background:#5f5f40"></div>
<div style="left:790px;top:108px;width:1px;height:19px;background:#5f5f40"></div>
<div style="left:705px;top:125px;width:86px;height:1px;background:#5f5f40"></div>
<div style="left:789px;top:109px;width:1px;height:17px;background:#5f5f40"></div>
<div class="t b" style="left:547px;width:400px;text-align:center;top:110px;font-size:12px;font-weight:bold;color:#000000;">Enlarge Graph</div>
<div style="left:708px;top:122px;width:7px;height:1px;background:#000000"></div>
<div class="t b" style="left:376px;width:400px;text-align:center;top:114px;font-size:12px;font-weight:bold;color:#000000;">Gamma vs. Futures Price</div>
<div style="left:420px;top:135px;width:354px;height:1px;background:#5f5f40"></div>
<div style="left:420px;top:135px;width:1px;height:261px;background:#5f5f40"></div>
<div style="left:420px;top:395px;width:354px;height:1px;background:#ffffff"></div>
<div style="left:773px;top:135px;width:1px;height:261px;background:#ffffff"></div>
<div style="left:416px;top:173px;width:357px;height:1px;background:#000000"></div>
<div style="left:416px;top:210px;width:357px;height:1px;background:#000000"></div>
<div style="left:416px;top:247px;width:357px;height:1px;background:#000000"></div>
<div style="left:416px;top:284px;width:357px;height:1px;background:#000000"></div>
<div style="left:416px;top:321px;width:357px;height:1px;background:#000000"></div>
<div style="left:416px;top:358px;width:357px;height:1px;background:#000000"></div>
<div style="left:479px;top:136px;width:1px;height:263px;background:#000000"></div>
<div style="left:538px;top:136px;width:1px;height:263px;background:#000000"></div>
<div style="left:596px;top:136px;width:1px;height:263px;background:#000000"></div>
<div style="left:655px;top:136px;width:1px;height:263px;background:#000000"></div>
<div style="left:714px;top:136px;width:1px;height:263px;background:#000000"></div>
<div class="t" style="left:113px;width:300px;text-align:right;top:130px;font-size:11px;font-weight:normal;color:#000000;">7.0000</div>
<div class="t" style="left:113px;width:300px;text-align:right;top:167px;font-size:11px;font-weight:normal;color:#000000;">6.0000</div>
<div class="t" style="left:113px;width:300px;text-align:right;top:204px;font-size:11px;font-weight:normal;color:#000000;">5.0000</div>
<div class="t" style="left:113px;width:300px;text-align:right;top:241px;font-size:11px;font-weight:normal;color:#000000;">4.0000</div>
<div class="t" style="left:113px;width:300px;text-align:right;top:278px;font-size:11px;font-weight:normal;color:#000000;">3.0000</div>
<div class="t" style="left:113px;width:300px;text-align:right;top:315px;font-size:11px;font-weight:normal;color:#000000;">2.0000</div>
<div class="t" style="left:113px;width:300px;text-align:right;top:352px;font-size:11px;font-weight:normal;color:#000000;">1.0000</div>
<div class="t" style="left:113px;width:300px;text-align:right;top:389px;font-size:11px;font-weight:normal;color:#000000;">0.0000</div>
<div class="t" style="left:220px;width:400px;text-align:center;top:402px;font-size:11px;font-weight:normal;color:#000000;">94-00</div>
<div class="t" style="left:279px;width:400px;text-align:center;top:402px;font-size:11px;font-weight:normal;color:#000000;">96-00</div>
<div class="t" style="left:338px;width:400px;text-align:center;top:402px;font-size:11px;font-weight:normal;color:#000000;">98-00</div>
<div class="t" style="left:396px;width:400px;text-align:center;top:402px;font-size:11px;font-weight:normal;color:#000000;">100-00</div>
<div class="t" style="left:455px;width:400px;text-align:center;top:402px;font-size:11px;font-weight:normal;color:#000000;">102-00</div>
<div class="t" style="left:514px;width:400px;text-align:center;top:402px;font-size:11px;font-weight:normal;color:#000000;">104-00</div>
<div class="t" style="left:573px;width:400px;text-align:center;top:402px;font-size:11px;font-weight:normal;color:#000000;">106-00</div>
<div class="t" style="left:376px;width:400px;text-align:center;top:420px;font-size:11px;font-weight:normal;color:#000000;">Futures Price</div>
<div class="t" style="left:322px;top:267px;width:100px;text-align:center;font-size:11px;letter-spacing:-0.25px;transform:rotate(-90deg);transform-origin:50% 50%">Gamma X 100</div>
<svg style="left:0px;top:0px" width="1024" height="768">
<path d="M450 395 L576 395 M609 395 L743 395" stroke="#000" stroke-width="7" stroke-linecap="round"/>
<path d="M576.1 396 L577.8 394.6 L579.5 392.9 L581.2 390.3 L582.4 386.9 L583.7 382.2 L584.6 375.4 L585.4 367.5 L585.4 357.3 L586.4 344.2 L587.5 329.3 L588.5 311.2 L589.3 292.4 L590.5 270.5 L591.25 248.4 L592 227.3 L592.8 207 L593.6 190.2 L594.7 177.7 L595.6 166 L597.5 168.3 L598.6 175.3 L599.4 188.3 L600.3 204.4 L601.4 223.3 L602.2 243.3 L603.4 263.1 L604.4 282.2 L605 299.3 L606.1 314.4 L607.5 325 L607.5 333.6 L607.5 395" fill="none" stroke="#000" stroke-width="1" shape-rendering="crispEdges"/>
<path d="M595 136 V395" stroke="#ff0000" stroke-width="0"/>
<circle cx="576.1" cy="396" r="3" fill="#00ff00" stroke="#000" stroke-width="1"/>
<circle cx="577.8" cy="394.6" r="3" fill="#00ff00" stroke="#000" stroke-width="1"/>
<circle cx="579.5" cy="392.9" r="3" fill="#00ff00" stroke="#000" stroke-width="1"/>
<circle cx="581.2" cy="390.3" r="3" fill="#00ff00" stroke="#000" stroke-width="1"/>
<circle cx="582.4" cy="386.9" r="3" fill="#00ff00" stroke="#000" stroke-width="1"/>
<circle cx="583.7" cy="382.2" r="3" fill="#00ff00" stroke="#000" stroke-width="1"/>
<circle cx="584.6" cy="375.4" r="3" fill="#00ff00" stroke="#000" stroke-width="1"/>
<circle cx="585.4" cy="367.5" r="3" fill="#00ff00" stroke="#000" stroke-width="1"/>
<circle cx="585.4" cy="357.3" r="3" fill="#00ff00" stroke="#000" stroke-width="1"/>
<circle cx="586.4" cy="344.2" r="3" fill="#00ff00" stroke="#000" stroke-width="1"/>
<circle cx="587.5" cy="329.3" r="3" fill="#00ff00" stroke="#000" stroke-width="1"/>
<circle cx="588.5" cy="311.2" r="3" fill="#00ff00" stroke="#000" stroke-width="1"/>
<circle cx="589.3" cy="292.4" r="3" fill="#00ff00" stroke="#000" stroke-width="1"/>
<circle cx="590.5" cy="270.5" r="3" fill="#00ff00" stroke="#000" stroke-width="1"/>
<circle cx="591.25" cy="248.4" r="3" fill="#00ff00" stroke="#000" stroke-width="1"/>
<circle cx="592" cy="227.3" r="3" fill="#00ff00" stroke="#000" stroke-width="1"/>
<circle cx="592.8" cy="207" r="3" fill="#00ff00" stroke="#000" stroke-width="1"/>
<circle cx="593.6" cy="190.2" r="3" fill="#00ff00" stroke="#000" stroke-width="1"/>
<circle cx="594.7" cy="177.7" r="3" fill="#00ff00" stroke="#000" stroke-width="1"/>
<circle cx="595.6" cy="166" r="3" fill="#00ff00" stroke="#000" stroke-width="1"/>
<circle cx="597.5" cy="168.3" r="3" fill="#00ff00" stroke="#000" stroke-width="1"/>
<circle cx="598.6" cy="175.3" r="3" fill="#00ff00" stroke="#000" stroke-width="1"/>
<circle cx="599.4" cy="188.3" r="3" fill="#00ff00" stroke="#000" stroke-width="1"/>
<circle cx="600.3" cy="204.4" r="3" fill="#00ff00" stroke="#000" stroke-width="1"/>
<circle cx="601.4" cy="223.3" r="3" fill="#00ff00" stroke="#000" stroke-width="1"/>
<circle cx="602.2" cy="243.3" r="3" fill="#00ff00" stroke="#000" stroke-width="1"/>
<circle cx="603.4" cy="263.1" r="3" fill="#00ff00" stroke="#000" stroke-width="1"/>
<circle cx="604.4" cy="282.2" r="3" fill="#00ff00" stroke="#000" stroke-width="1"/>
<circle cx="605" cy="299.3" r="3" fill="#00ff00" stroke="#000" stroke-width="1"/>
<circle cx="606.1" cy="314.4" r="3" fill="#00ff00" stroke="#000" stroke-width="1"/>
<circle cx="607.5" cy="325" r="3" fill="#00ff00" stroke="#000" stroke-width="1"/>
<circle cx="607.5" cy="333.6" r="3" fill="#00ff00" stroke="#000" stroke-width="1"/>
<circle cx="743.5" cy="395" r="3" fill="#00ff00" stroke="#000" stroke-width="1"/>
<rect x="595" y="136" width="2" height="264" fill="#ff0000"/>
<path d="M611 190.5 H714.5 Q719.5 190.5 719.5 185.5 V159" fill="none" stroke="#000" stroke-width="1"/>
<path d="M615.5 155.5 H714 Q718.5 155.5 718.5 160 V185 Q718.5 189.5 714 189.5 H615 L602.5 201 L610.5 184.5 V160.5 Q610.5 155.5 615.5 155.5 Z" fill="#fff" stroke="#000" stroke-width="1"/>
</svg>
<div class="t" style="left:464px;width:400px;text-align:center;top:159px;font-size:11px;font-weight:normal;color:#000000;">Futures Price:100-00</div>
<div class="t" style="left:464px;width:400px;text-align:center;top:173px;font-size:11px;font-weight:normal;color:#000000;letter-spacing:-0.35px">Gamma: 5.1714</div>
<div class="t b" style="left:376px;width:400px;text-align:center;top:443px;font-size:12px;font-weight:bold;color:#000000;">Y-AXIS</div>
<div style="left:370px;top:459px;width:81px;height:25px;background:#a0a080"></div>
<div style="left:370px;top:459px;width:81px;height:25px;border:1px solid #000;border-radius:1px"></div>
<div style="left:371px;top:460px;width:79px;height:1px;background:#ffffff"></div>
<div style="left:371px;top:460px;width:1px;height:23px;background:#ffffff"></div>
<div style="left:371px;top:482px;width:79px;height:1px;background:#5f5f40"></div>
<div style="left:449px;top:460px;width:1px;height:23px;background:#5f5f40"></div>
<div style="left:372px;top:481px;width:78px;height:1px;background:#5f5f40"></div>
<div style="left:448px;top:461px;width:1px;height:21px;background:#5f5f40"></div>
<div class="t b" style="left:210px;width:400px;text-align:center;top:464px;font-size:12px;font-weight:bold;color:#000000;">Option Price</div>
<div style="left:454px;top:459px;width:81px;height:25px;background:#a0a080"></div>
<div style="left:454px;top:459px;width:81px;height:25px;border:1px solid #000;border-radius:1px"></div>
<div style="left:455px;top:460px;width:79px;height:1px;background:#ffffff"></div>
<div style="left:455px;top:460px;width:1px;height:23px;background:#ffffff"></div>
<div style="left:455px;top:482px;width:79px;height:1px;background:#5f5f40"></div>
<div style="left:533px;top:460px;width:1px;height:23px;background:#5f5f40"></div>
<div style="left:456px;top:481px;width:78px;height:1px;background:#5f5f40"></div>
<div style="left:532px;top:461px;width:1px;height:21px;background:#5f5f40"></div>
<div class="t b" style="left:294px;width:400px;text-align:center;top:464px;font-size:12px;font-weight:bold;color:#000000;">Delta</div>
<div style="left:538px;top:459px;width:81px;height:25px;background:#a0a080"></div>
<div style="left:538px;top:459px;width:81px;height:25px;border:1px solid #000;border-radius:1px"></div>
<div style="left:539px;top:460px;width:79px;height:1px;background:#5f5f40"></div>
<div style="left:539px;top:460px;width:1px;height:23px;background:#5f5f40"></div>
<div style="left:540px;top:461px;width:77px;height:1px;background:#5f5f40"></div>
<div style="left:540px;top:461px;width:1px;height:21px;background:#5f5f40"></div>
<div style="left:539px;top:482px;width:79px;height:1px;background:#ffffff"></div>
<div style="left:617px;top:460px;width:1px;height:23px;background:#ffffff"></div>
<div style="left:540px;top:481px;width:78px;height:1px;background:#ffffff"></div>
<div style="left:616px;top:461px;width:1px;height:21px;background:#ffffff"></div>
<div class="t b" style="left:379px;width:400px;text-align:center;top:464px;font-size:12px;font-weight:bold;color:#000000;">Gamma</div>
<div style="left:622px;top:459px;width:81px;height:25px;background:#a0a080"></div>
<div style="left:622px;top:459px;width:81px;height:25px;border:1px solid #000;border-radius:1px"></div>
<div style="left:623px;top:460px;width:79px;height:1px;background:#ffffff"></div>
<div style="left:623px;top:460px;width:1px;height:23px;background:#ffffff"></div>
<div style="left:623px;top:482px;width:79px;height:1px;background:#5f5f40"></div>
<div style="left:701px;top:460px;width:1px;height:23px;background:#5f5f40"></div>
<div style="left:624px;top:481px;width:78px;height:1px;background:#5f5f40"></div>
<div style="left:700px;top:461px;width:1px;height:21px;background:#5f5f40"></div>
<div class="t b" style="left:462px;width:400px;text-align:center;top:464px;font-size:12px;font-weight:bold;color:#000000;">Theta</div>
<div style="left:706px;top:459px;width:81px;height:25px;background:#a0a080"></div>
<div style="left:706px;top:459px;width:81px;height:25px;border:1px solid #000;border-radius:1px"></div>
<div style="left:707px;top:460px;width:79px;height:1px;background:#ffffff"></div>
<div style="left:707px;top:460px;width:1px;height:23px;background:#ffffff"></div>
<div style="left:707px;top:482px;width:79px;height:1px;background:#5f5f40"></div>
<div style="left:785px;top:460px;width:1px;height:23px;background:#5f5f40"></div>
<div style="left:708px;top:481px;width:78px;height:1px;background:#5f5f40"></div>
<div style="left:784px;top:461px;width:1px;height:21px;background:#5f5f40"></div>
<div class="t b" style="left:546px;width:400px;text-align:center;top:464px;font-size:12px;font-weight:bold;color:#000000;">Vega</div>
<div class="t b" style="left:242px;width:400px;text-align:center;top:491px;font-size:12px;font-weight:bold;color:#000000;">X-AXIS</div>
<div class="t b" style="left:332px;width:400px;text-align:center;top:491px;font-size:12px;font-weight:bold;color:#000000;">Range</div>
<div class="t b" style="left:414px;width:400px;text-align:center;top:491px;font-size:12px;font-weight:bold;color:#000000;">Minimum</div>
<div class="t b" style="left:510px;width:400px;text-align:center;top:491px;font-size:12px;font-weight:bold;color:#000000;">Maximum</div>
<div style="left:394px;top:515px;width:101px;height:25px;background:#a0a080"></div>
<div style="left:394px;top:515px;width:101px;height:25px;border:1px solid #000;border-radius:1px"></div>
<div style="left:395px;top:516px;width:99px;height:1px;background:#5f5f40"></div>
<div style="left:395px;top:516px;width:1px;height:23px;background:#5f5f40"></div>
<div style="left:396px;top:517px;width:97px;height:1px;background:#5f5f40"></div>
<div style="left:396px;top:517px;width:1px;height:21px;background:#5f5f40"></div>
<div style="left:395px;top:538px;width:99px;height:1px;background:#ffffff"></div>
<div style="left:493px;top:516px;width:1px;height:23px;background:#ffffff"></div>
<div style="left:396px;top:537px;width:98px;height:1px;background:#ffffff"></div>
<div style="left:492px;top:517px;width:1px;height:21px;background:#ffffff"></div>
<div class="t b" style="left:245px;width:400px;text-align:center;top:520px;font-size:12px;font-weight:bold;color:#000000;">Futures Range</div>
<div style="left:394px;top:543px;width:101px;height:25px;background:#a0a080"></div>
<div style="left:394px;top:543px;width:101px;height:25px;border:1px solid #000;border-radius:1px"></div>
<div style="left:395px;top:544px;width:99px;height:1px;background:#ffffff"></div>
<div style="left:395px;top:544px;width:1px;height:23px;background:#ffffff"></div>
<div style="left:395px;top:566px;width:99px;height:1px;background:#5f5f40"></div>
<div style="left:493px;top:544px;width:1px;height:23px;background:#5f5f40"></div>
<div style="left:396px;top:565px;width:98px;height:1px;background:#5f5f40"></div>
<div style="left:492px;top:545px;width:1px;height:21px;background:#5f5f40"></div>
<div class="t b" style="left:244px;width:400px;text-align:center;top:548px;font-size:12px;font-weight:bold;color:#000000;">Volatility Range</div>
<div style="left:394px;top:571px;width:101px;height:25px;background:#a0a080"></div>
<div style="left:394px;top:571px;width:101px;height:25px;border:1px solid #000;border-radius:1px"></div>
<div style="left:395px;top:572px;width:99px;height:1px;background:#ffffff"></div>
<div style="left:395px;top:572px;width:1px;height:23px;background:#ffffff"></div>
<div style="left:395px;top:594px;width:99px;height:1px;background:#5f5f40"></div>
<div style="left:493px;top:572px;width:1px;height:23px;background:#5f5f40"></div>
<div style="left:396px;top:593px;width:98px;height:1px;background:#5f5f40"></div>
<div style="left:492px;top:573px;width:1px;height:21px;background:#5f5f40"></div>
<div class="t b" style="left:244px;width:400px;text-align:center;top:576px;font-size:12px;font-weight:bold;color:#000000;">Time Horizon</div>
<div style="left:518px;top:515px;width:27px;height:27px;background:#a0a080"></div>
<div style="left:518px;top:515px;width:27px;height:27px;border:1px solid #000;border-radius:1px"></div>
<div style="left:519px;top:516px;width:25px;height:1px;background:#ffffff"></div>
<div style="left:519px;top:516px;width:1px;height:25px;background:#ffffff"></div>
<div style="left:520px;top:539px;width:23px;height:1px;background:#ffffff"></div>
<div style="left:542px;top:517px;width:1px;height:23px;background:#ffffff"></div>
<div style="left:519px;top:540px;width:25px;height:1px;background:#5f5f40"></div>
<div style="left:543px;top:516px;width:1px;height:25px;background:#5f5f40"></div>
<svg style="left:522px;top:516px" width="18" height="22" viewBox="0 0 18 22"><defs><pattern id="dith" width="2" height="2" patternUnits="userSpaceOnUse"><rect width="2" height="2" fill="#b8b488"/><rect width="1" height="1" fill="#6e6a10"/><rect x="1" y="1" width="1" height="1" fill="#6e6a10"/></pattern></defs><path d="M5 10.5 V7.5 Q5 4.5 8.5 4.5 Q12.5 4.5 12.5 7.5" fill="none" stroke="#000" stroke-width="2.2"/><path d="M5 10.5 V7.5 Q5 4.5 8.5 4.5 Q12.5 4.5 12.5 7.5" fill="none" stroke="#a0a080" stroke-width="0.5"/><rect x="2.6" y="10.6" width="11.8" height="8.2" rx="1.6" fill="url(#dith)" stroke="#000" stroke-width="1.2"/><rect x="3.3" y="11.3" width="10.4" height="1.2" fill="#fff"/><path d="M6.8 13.3 H10.2 M8.5 13 V17" stroke="#000" stroke-width="1.4"/></svg>
<div style="left:518px;top:543px;width:27px;height:27px;background:#a0a080"></div>
<div style="left:518px;top:543px;width:27px;height:27px;border:1px solid #000;border-radius:1px"></div>
<div style="left:519px;top:544px;width:25px;height:1px;background:#ffffff"></div>
<div style="left:519px;top:544px;width:1px;height:25px;background:#ffffff"></div>
<div style="left:520px;top:567px;width:23px;height:1px;background:#ffffff"></div>
<div style="left:542px;top:545px;width:1px;height:23px;background:#ffffff"></div>
<div style="left:519px;top:568px;width:25px;height:1px;background:#5f5f40"></div>
<div style="left:543px;top:544px;width:1px;height:25px;background:#5f5f40"></div>
<svg style="left:522px;top:544px" width="18" height="22" viewBox="0 0 18 22"><path d="M5 10.5 V7.5 Q5 4.5 8.5 4.5 Q12.5 4.5 12.5 7.5" fill="none" stroke="#000" stroke-width="2.2"/><path d="M5 10.5 V7.5 Q5 4.5 8.5 4.5 Q12.5 4.5 12.5 7.5" fill="none" stroke="#a0a080" stroke-width="0.5"/><rect x="2.6" y="10.6" width="11.8" height="8.2" rx="1.6" fill="url(#dith)" stroke="#000" stroke-width="1.2"/><rect x="3.3" y="11.3" width="10.4" height="1.2" fill="#fff"/><path d="M6.8 13.3 H10.2 M8.5 13 V17" stroke="#000" stroke-width="1.4"/></svg>
<div style="left:518px;top:571px;width:27px;height:27px;background:#a0a080"></div>
<div style="left:518px;top:571px;width:27px;height:27px;border:1px solid #000;border-radius:1px"></div>
<div style="left:519px;top:572px;width:25px;height:1px;background:#ffffff"></div>
<div style="left:519px;top:572px;width:1px;height:25px;background:#ffffff"></div>
<div style="left:520px;top:595px;width:23px;height:1px;background:#ffffff"></div>
<div style="left:542px;top:573px;width:1px;height:23px;background:#ffffff"></div>
<div style="left:519px;top:596px;width:25px;height:1px;background:#5f5f40"></div>
<div style="left:543px;top:572px;width:1px;height:25px;background:#5f5f40"></div>
<svg style="left:522px;top:572px" width="18" height="22" viewBox="0 0 18 22"><path d="M5 10.5 V7.5 Q5 4.5 8.5 4.5 Q12.5 4.5 12.5 7.5" fill="none" stroke="#000" stroke-width="2.2"/><path d="M5 10.5 V7.5 Q5 4.5 8.5 4.5 Q12.5 4.5 12.5 7.5" fill="none" stroke="#a0a080" stroke-width="0.5"/><rect x="2.6" y="10.6" width="11.8" height="8.2" rx="1.6" fill="url(#dith)" stroke="#000" stroke-width="1.2"/><rect x="3.3" y="11.3" width="10.4" height="1.2" fill="#fff"/><path d="M6.8 13.3 H10.2 M8.5 13 V17" stroke="#000" stroke-width="1.4"/></svg>
<div style="left:573px;top:517px;width:66px;height:21px;background:#ffffff"></div>
<div style="left:573px;top:517px;width:66px;height:1px;background:#5f5f40"></div>
<div style="left:573px;top:517px;width:1px;height:21px;background:#5f5f40"></div>
<div style="left:573px;top:537px;width:66px;height:1px;background:#ffffff"></div>
<div style="left:638px;top:517px;width:1px;height:21px;background:#ffffff"></div>
<div style="left:574px;top:518px;width:64px;height:1px;background:#000000"></div>
<div style="left:574px;top:518px;width:1px;height:19px;background:#000000"></div>
<div style="left:574px;top:536px;width:64px;height:1px;background:#a0a080"></div>
<div style="left:637px;top:518px;width:1px;height:19px;background:#a0a080"></div>
<div class="t b" style="left:577px;top:520px;font-size:12px;font-weight:bold;color:#005c00;">95-00</div>
<div style="left:638px;top:517px;width:17px;height:21px;background:#a0a080"></div>
<div style="left:638px;top:517px;width:17px;height:1px;background:#000000"></div>
<div style="left:638px;top:537px;width:17px;height:1px;background:#000000"></div>
<div style="left:654px;top:517px;width:1px;height:21px;background:#000000"></div>
<div style="left:638px;top:518px;width:16px;height:1px;background:#ffffff"></div>
<div style="left:638px;top:518px;width:1px;height:19px;background:#ffffff"></div>
<div style="left:639px;top:518px;width:1px;height:19px;background:#ffffff"></div>
<div style="left:640px;top:536px;width:14px;height:1px;background:#5f5f40"></div>
<div style="left:653px;top:519px;width:1px;height:18px;background:#5f5f40"></div>
<svg style="left:0;top:0" width="1024" height="768" shape-rendering="crispEdges"><g fill="#000"><rect x="645.5" y="521" width="2" height="1"/><rect x="645.5" y="533" width="2" height="1"/><rect x="644.5" y="522" width="4" height="1"/><rect x="644.5" y="532" width="4" height="1"/><rect x="643.5" y="523" width="6" height="1"/><rect x="643.5" y="531" width="6" height="1"/><rect x="642.5" y="524" width="8" height="1"/><rect x="642.5" y="530" width="8" height="1"/><rect x="641.5" y="525" width="10" height="1"/><rect x="641.5" y="529" width="10" height="1"/><rect x="641.0" y="527" width="11" height="1"/></g></svg>
<div style="left:670px;top:517px;width:65px;height:21px;background:#ffffff"></div>
<div style="left:670px;top:517px;width:65px;height:1px;background:#5f5f40"></div>
<div style="left:670px;top:517px;width:1px;height:21px;background:#5f5f40"></div>
<div style="left:670px;top:537px;width:65px;height:1px;background:#ffffff"></div>
<div style="left:734px;top:517px;width:1px;height:21px;background:#ffffff"></div>
<div style="left:671px;top:518px;width:63px;height:1px;background:#000000"></div>
<div style="left:671px;top:518px;width:1px;height:19px;background:#000000"></div>
<div style="left:671px;top:536px;width:63px;height:1px;background:#a0a080"></div>
<div style="left:733px;top:518px;width:1px;height:19px;background:#a0a080"></div>
<div class="t b" style="left:674px;top:520px;font-size:12px;font-weight:bold;color:#005c00;">105-00</div>
<div style="left:734px;top:517px;width:17px;height:21px;background:#a0a080"></div>
<div style="left:734px;top:517px;width:17px;height:1px;background:#000000"></div>
<div style="left:734px;top:537px;width:17px;height:1px;background:#000000"></div>
<div style="left:750px;top:517px;width:1px;height:21px;background:#000000"></div>
<div style="left:734px;top:518px;width:16px;height:1px;background:#ffffff"></div>
<div style="left:734px;top:518px;width:1px;height:19px;background:#ffffff"></div>
<div style="left:735px;top:518px;width:1px;height:19px;background:#ffffff"></div>
<div style="left:736px;top:536px;width:14px;height:1px;background:#5f5f40"></div>
<div style="left:749px;top:519px;width:1px;height:18px;background:#5f5f40"></div>
<svg style="left:0;top:0" width="1024" height="768" shape-rendering="crispEdges"><g fill="#000"><rect x="741.5" y="521" width="2" height="1"/><rect x="741.5" y="533" width="2" height="1"/><rect x="740.5" y="522" width="4" height="1"/><rect x="740.5" y="532" width="4" height="1"/><rect x="739.5" y="523" width="6" height="1"/><rect x="739.5" y="531" width="6" height="1"/><rect x="738.5" y="524" width="8" height="1"/><rect x="738.5" y="530" width="8" height="1"/><rect x="737.5" y="525" width="10" height="1"/><rect x="737.5" y="529" width="10" height="1"/><rect x="737.0" y="527" width="11" height="1"/></g></svg>
<div style="left:573px;top:545px;width:66px;height:21px;background:#ffffff"></div>
<div style="left:573px;top:545px;width:66px;height:1px;background:#5f5f40"></div>
<div style="left:573px;top:545px;width:1px;height:21px;background:#5f5f40"></div>
<div style="left:573px;top:565px;width:66px;height:1px;background:#ffffff"></div>
<div style="left:638px;top:545px;width:1px;height:21px;background:#ffffff"></div>
<div style="left:574px;top:546px;width:64px;height:1px;background:#000000"></div>
<div style="left:574px;top:546px;width:1px;height:19px;background:#000000"></div>
<div style="left:574px;top:564px;width:64px;height:1px;background:#a0a080"></div>
<div style="left:637px;top:546px;width:1px;height:19px;background:#a0a080"></div>
<div class="t b" style="left:577px;top:548px;font-size:12px;font-weight:bold;color:#005c00;">0.10</div>
<div style="left:638px;top:545px;width:17px;height:21px;background:#a0a080"></div>
<div style="left:638px;top:545px;width:17px;height:1px;background:#000000"></div>
<div style="left:638px;top:565px;width:17px;height:1px;background:#000000"></div>
<div style="left:654px;top:545px;width:1px;height:21px;background:#000000"></div>
<div style="left:638px;top:546px;width:16px;height:1px;background:#ffffff"></div>
<div style="left:638px;top:546px;width:1px;height:19px;background:#ffffff"></div>
<div style="left:639px;top:546px;width:1px;height:19px;background:#ffffff"></div>
<div style="left:640px;top:564px;width:14px;height:1px;background:#5f5f40"></div>
<div style="left:653px;top:547px;width:1px;height:18px;background:#5f5f40"></div>
<svg style="left:0;top:0" width="1024" height="768" shape-rendering="crispEdges"><g fill="#000"><rect x="645.5" y="549" width="2" height="1"/><rect x="645.5" y="561" width="2" height="1"/><rect x="644.5" y="550" width="4" height="1"/><rect x="644.5" y="560" width="4" height="1"/><rect x="643.5" y="551" width="6" height="1"/><rect x="643.5" y="559" width="6" height="1"/><rect x="642.5" y="552" width="8" height="1"/><rect x="642.5" y="558" width="8" height="1"/><rect x="641.5" y="553" width="10" height="1"/><rect x="641.5" y="557" width="10" height="1"/><rect x="641.0" y="555" width="11" height="1"/></g></svg>
<div style="left:670px;top:545px;width:65px;height:21px;background:#ffffff"></div>
<div style="left:670px;top:545px;width:65px;height:1px;background:#5f5f40"></div>
<div style="left:670px;top:545px;width:1px;height:21px;background:#5f5f40"></div>
<div style="left:670px;top:565px;width:65px;height:1px;background:#ffffff"></div>
<div style="left:734px;top:545px;width:1px;height:21px;background:#ffffff"></div>
<div style="left:671px;top:546px;width:63px;height:1px;background:#000000"></div>
<div style="left:671px;top:546px;width:1px;height:19px;background:#000000"></div>
<div style="left:671px;top:564px;width:63px;height:1px;background:#a0a080"></div>
<div style="left:733px;top:546px;width:1px;height:19px;background:#a0a080"></div>
<div class="t b" style="left:674px;top:548px;font-size:12px;font-weight:bold;color:#005c00;">1.38</div>
<div style="left:734px;top:545px;width:17px;height:21px;background:#a0a080"></div>
<div style="left:734px;top:545px;width:17px;height:1px;background:#000000"></div>
<div style="left:734px;top:565px;width:17px;height:1px;background:#000000"></div>
<div style="left:750px;top:545px;width:1px;height:21px;background:#000000"></div>
<div style="left:734px;top:546px;width:16px;height:1px;background:#ffffff"></div>
<div style="left:734px;top:546px;width:1px;height:19px;background:#ffffff"></div>
<div style="left:735px;top:546px;width:1px;height:19px;background:#ffffff"></div>
<div style="left:736px;top:564px;width:14px;height:1px;background:#5f5f40"></div>
<div style="left:749px;top:547px;width:1px;height:18px;background:#5f5f40"></div>
<svg style="left:0;top:0" width="1024" height="768" shape-rendering="crispEdges"><g fill="#000"><rect x="741.5" y="549" width="2" height="1"/><rect x="741.5" y="561" width="2" height="1"/><rect x="740.5" y="550" width="4" height="1"/><rect x="740.5" y="560" width="4" height="1"/><rect x="739.5" y="551" width="6" height="1"/><rect x="739.5" y="559" width="6" height="1"/><rect x="738.5" y="552" width="8" height="1"/><rect x="738.5" y="558" width="8" height="1"/><rect x="737.5" y="553" width="10" height="1"/><rect x="737.5" y="557" width="10" height="1"/><rect x="737.0" y="555" width="11" height="1"/></g></svg>
<div style="left:573px;top:573px;width:66px;height:21px;background:#ffffff"></div>
<div style="left:573px;top:573px;width:66px;height:1px;background:#5f5f40"></div>
<div style="left:573px;top:573px;width:1px;height:21px;background:#5f5f40"></div>
<div style="left:573px;top:593px;width:66px;height:1px;background:#ffffff"></div>
<div style="left:638px;top:573px;width:1px;height:21px;background:#ffffff"></div>
<div style="left:574px;top:574px;width:64px;height:1px;background:#000000"></div>
<div style="left:574px;top:574px;width:1px;height:19px;background:#000000"></div>
<div style="left:574px;top:592px;width:64px;height:1px;background:#a0a080"></div>
<div style="left:637px;top:574px;width:1px;height:19px;background:#a0a080"></div>
<div class="t b" style="left:577px;top:576px;font-size:12px;font-weight:bold;color:#005c00;letter-spacing:1px">03/14/02</div>
<div style="left:638px;top:573px;width:17px;height:21px;background:#a0a080"></div>
<div style="left:638px;top:573px;width:17px;height:1px;background:#000000"></div>
<div style="left:638px;top:593px;width:17px;height:1px;background:#000000"></div>
<div style="left:654px;top:573px;width:1px;height:21px;background:#000000"></div>
<div style="left:638px;top:574px;width:16px;height:1px;background:#ffffff"></div>
<div style="left:638px;top:574px;width:1px;height:19px;background:#ffffff"></div>
<div style="left:639px;top:574px;width:1px;height:19px;background:#ffffff"></div>
<div style="left:640px;top:592px;width:14px;height:1px;background:#5f5f40"></div>
<div style="left:653px;top:575px;width:1px;height:18px;background:#5f5f40"></div>
<svg style="left:0;top:0" width="1024" height="768" shape-rendering="crispEdges"><g fill="#000"><rect x="645.5" y="577" width="2" height="1"/><rect x="645.5" y="589" width="2" height="1"/><rect x="644.5" y="578" width="4" height="1"/><rect x="644.5" y="588" width="4" height="1"/><rect x="643.5" y="579" width="6" height="1"/><rect x="643.5" y="587" width="6" height="1"/><rect x="642.5" y="580" width="8" height="1"/><rect x="642.5" y="586" width="8" height="1"/><rect x="641.5" y="581" width="10" height="1"/><rect x="641.5" y="585" width="10" height="1"/><rect x="641.0" y="583" width="11" height="1"/></g></svg>
<div style="left:670px;top:573px;width:65px;height:21px;background:#ffffff"></div>
<div style="left:670px;top:573px;width:65px;height:1px;background:#5f5f40"></div>
<div style="left:670px;top:573px;width:1px;height:21px;background:#5f5f40"></div>
<div style="left:670px;top:593px;width:65px;height:1px;background:#ffffff"></div>
<div style="left:734px;top:573px;width:1px;height:21px;background:#ffffff"></div>
<div style="left:671px;top:574px;width:63px;height:1px;background:#000000"></div>
<div style="left:671px;top:574px;width:1px;height:19px;background:#000000"></div>
<div style="left:671px;top:592px;width:63px;height:1px;background:#a0a080"></div>
<div style="left:733px;top:574px;width:1px;height:19px;background:#a0a080"></div>
<div class="t b" style="left:674px;top:576px;font-size:12px;font-weight:bold;color:#005c00;letter-spacing:1px">06/21/02</div>
<div style="left:734px;top:573px;width:17px;height:21px;background:#a0a080"></div>
<div style="left:734px;top:573px;width:17px;height:1px;background:#000000"></div>
<div style="left:734px;top:593px;width:17px;height:1px;background:#000000"></div>
<div style="left:750px;top:573px;width:1px;height:21px;background:#000000"></div>
<div style="left:734px;top:574px;width:16px;height:1px;background:#ffffff"></div>
<div style="left:734px;top:574px;width:1px;height:19px;background:#ffffff"></div>
<div style="left:735px;top:574px;width:1px;height:19px;background:#ffffff"></div>
<div style="left:736px;top:592px;width:14px;height:1px;background:#5f5f40"></div>
<div style="left:749px;top:575px;width:1px;height:18px;background:#5f5f40"></div>
<svg style="left:0;top:0" width="1024" height="768" shape-rendering="crispEdges"><g fill="#000"><rect x="741.5" y="577" width="2" height="1"/><rect x="741.5" y="589" width="2" height="1"/><rect x="740.5" y="578" width="4" height="1"/><rect x="740.5" y="588" width="4" height="1"/><rect x="739.5" y="579" width="6" height="1"/><rect x="739.5" y="587" width="6" height="1"/><rect x="738.5" y="580" width="8" height="1"/><rect x="738.5" y="586" width="8" height="1"/><rect x="737.5" y="581" width="10" height="1"/><rect x="737.5" y="585" width="10" height="1"/><rect x="737.0" y="583" width="11" height="1"/></g></svg>
<div style="left:0px;top:720px;width:1024px;height:20px;background:#a0a080"></div>
<div style="left:0px;top:720px;width:1024px;height:1px;background:#000000"></div>
<div style="left:0px;top:720px;width:1px;height:20px;background:#000000"></div>
<div style="left:1px;top:721px;width:1022px;height:1px;background:#ffffff"></div>
<div style="left:1px;top:721px;width:1px;height:18px;background:#ffffff"></div>
<div style="left:0px;top:739px;width:1024px;height:1px;background:#000000"></div>
<div style="left:1023px;top:720px;width:1px;height:20px;background:#000000"></div>
<div style="left:1022px;top:721px;width:1px;height:18px;background:#ffffff"></div>
<div style="left:2px;top:722px;width:735px;height:1px;background:#5f5f40"></div>
<div style="left:2px;top:722px;width:1px;height:16px;background:#5f5f40"></div>
<div style="left:2px;top:737px;width:735px;height:1px;background:#ffffff"></div>
<div style="left:736px;top:722px;width:1px;height:16px;background:#ffffff"></div>
<div class="t b" style="left:5px;top:723px;font-size:12px;font-weight:bold;color:#000000;">Option Contract CBOT Ticker symbol:CGN2</div>
<div style="left:739px;top:722px;width:136px;height:1px;background:#5f5f40"></div>
<div style="left:739px;top:722px;width:1px;height:16px;background:#5f5f40"></div>
<div style="left:739px;top:737px;width:136px;height:1px;background:#ffffff"></div>
<div style="left:874px;top:722px;width:1px;height:16px;background:#ffffff"></div>
<div class="t" style="left:746px;top:723px;font-size:12px;font-weight:normal;color:#000000;letter-spacing:-0.6px">Starting Mo/Yr: May 2000</div>
<div style="left:877px;top:722px;width:74px;height:1px;background:#5f5f40"></div>
<div style="left:877px;top:722px;width:1px;height:16px;background:#5f5f40"></div>
<div style="left:877px;top:737px;width:74px;height:1px;background:#ffffff"></div>
<div style="left:950px;top:722px;width:1px;height:16px;background:#ffffff"></div>
<div class="t" style="left:880px;top:723px;font-size:12px;font-weight:normal;color:#000000;letter-spacing:-0.95px">Calendar Days</div>
<div style="left:953px;top:722px;width:36px;height:16px;background:#5f5f40"></div>
<div style="left:953px;top:722px;width:36px;height:1px;background:#5f5f40"></div>
<div style="left:953px;top:722px;width:1px;height:16px;background:#5f5f40"></div>
<div style="left:953px;top:737px;width:36px;height:1px;background:#ffffff"></div>
<div style="left:988px;top:722px;width:1px;height:16px;background:#ffffff"></div>
<div style="left:991px;top:722px;width:30px;height:1px;background:#5f5f40"></div>
<div style="left:991px;top:722px;width:1px;height:16px;background:#5f5f40"></div>
<div style="left:991px;top:737px;width:30px;height:1px;background:#ffffff"></div>
<div style="left:1020px;top:722px;width:1px;height:16px;background:#ffffff"></div>
<div class="t" style="left:994px;top:723px;font-size:12px;font-weight:normal;color:#000000;letter-spacing:-0.6px">OVR</div>
<div style="left:0px;top:740px;width:1024px;height:28px;background:#a0a080"></div>
<div style="left:0px;top:741px;width:1024px;height:1px;background:#ffffff"></div>
<div style="left:2px;top:744px;width:54px;height:1px;background:#ffffff"></div>
<div style="left:2px;top:744px;width:1px;height:22px;background:#ffffff"></div>
<div style="left:2px;top:765px;width:54px;height:1px;background:#000000"></div>
<div style="left:55px;top:744px;width:1px;height:22px;background:#000000"></div>
<div style="left:3px;top:745px;width:52px;height:1px;background:#a0a080"></div>
<div style="left:3px;top:745px;width:1px;height:20px;background:#a0a080"></div>
<div style="left:3px;top:764px;width:52px;height:1px;background:#5f5f40"></div>
<div style="left:54px;top:745px;width:1px;height:20px;background:#5f5f40"></div>
<div class="t b" style="left:24px;top:748px;font-size:12px;font-weight:bold;color:#000000;">Start</div>
<svg style="left:0;top:740px" width="30" height="28" viewBox="0 740 30 28"><path d="M10.5 750 L14 748 L18 748 L22 750 V762.5 L18 760.5 L14 760.5 L10.5 762.5 Z" fill="#000"/><path d="M14 751.5 L16.5 750 V754 L14 755.5 Z" fill="#f00"/><path d="M17.5 750 L20 751.5 V755.5 L17.5 754 Z" fill="#0f0"/><path d="M14 756.5 L16.5 755 V759 L14 760 Z" fill="#00f"/><path d="M17.5 755 L20 756.5 V760 L17.5 759 Z" fill="#ff0"/><rect x="6" y="750" width="1" height="2" fill="#000"/><rect x="6" y="753" width="1" height="2" fill="#f00"/><rect x="6" y="756" width="1" height="2" fill="#00f"/><rect x="6" y="759" width="1" height="2" fill="#000"/><rect x="8" y="751" width="3" height="1.5" fill="#000"/><rect x="8" y="753.5" width="3" height="2" fill="#f00"/><rect x="8" y="757" width="3" height="2" fill="#00f"/><rect x="8" y="760" width="3" height="1.5" fill="#000"/></svg>
<div style="left:58px;top:744px;width:1px;height:22px;background:#5f5f40"></div>
<div style="left:59px;top:744px;width:1px;height:22px;background:#ffffff"></div>
<div style="left:62px;top:746px;width:3px;height:1px;background:#ffffff"></div>
<div style="left:62px;top:746px;width:1px;height:18px;background:#ffffff"></div>
<div style="left:62px;top:763px;width:3px;height:1px;background:#5f5f40"></div>
<div style="left:64px;top:746px;width:1px;height:18px;background:#5f5f40"></div>
<div style="left:69px;top:744px;width:160px;height:1px;background:#ffffff"></div>
<div style="left:69px;top:744px;width:1px;height:22px;background:#ffffff"></div>
<div style="left:69px;top:765px;width:160px;height:1px;background:#000000"></div>
<div style="left:228px;top:744px;width:1px;height:22px;background:#000000"></div>
<div style="left:70px;top:745px;width:158px;height:1px;background:#a0a080"></div>
<div style="left:70px;top:745px;width:1px;height:20px;background:#a0a080"></div>
<div style="left:70px;top:764px;width:158px;height:1px;background:#5f5f40"></div>
<div style="left:227px;top:745px;width:1px;height:20px;background:#5f5f40"></div>
<svg style="left:73px;top:747px" width="16" height="14" viewBox="0 0 16 14"><path d="M1 3 L6 3 L7 1 L12 1 L12 3 L15 3 L15 13 L1 13 Z" fill="#ffe680" stroke="#5a5a20" stroke-width="1"/></svg>
<div class="t" style="left:91px;top:749px;font-size:12px;font-weight:normal;color:#000000;letter-spacing:-0.6px">My Pictures</div>
<div style="left:231px;top:744px;width:161px;height:22px;background-color:#fff;background-image:linear-gradient(45deg,#a0a080 25%,transparent 25%,transparent 75%,#a0a080 75%),linear-gradient(45deg,#a0a080 25%,transparent 25%,transparent 75%,#a0a080 75%);background-size:2px 2px;background-position:0 0,1px 1px"></div>
<div style="left:231px;top:744px;width:161px;height:1px;background:#000000"></div>
<div style="left:231px;top:744px;width:1px;height:22px;background:#000000"></div>
<div style="left:232px;top:745px;width:159px;height:1px;background:#5f5f40"></div>
<div style="left:232px;top:745px;width:1px;height:20px;background:#5f5f40"></div>
<div style="left:231px;top:765px;width:161px;height:1px;background:#ffffff"></div>
<div style="left:391px;top:744px;width:1px;height:22px;background:#ffffff"></div>
<svg style="left:235px;top:746px" width="20" height="18" viewBox="0 0 20 18"><path d="M7 1 H13 L16 4 V9 L13 12 H7 L4 9 V4 Z" fill="#b4b28c" stroke="#000" stroke-width="0.6"/><rect x="7.5" y="3.5" width="5" height="5" fill="none" stroke="#000" stroke-width="1"/><path d="M5 4 L8 1.5 M12 1.5 L15 4 M5 9 L8 11.5 M12 11.5 L15 9" stroke="#000" stroke-width="0.9"/><rect x="8" y="12" width="4" height="5" fill="#b4b28c"/><rect x="2" y="13" width="4" height="4" fill="#000"/><rect x="3" y="13" width="3" height="1" fill="#b4b28c"/><rect x="12" y="14" width="2" height="2" fill="#b4b28c"/><rect x="14" y="13" width="4" height="1" fill="#b4b28c"/><rect x="14" y="16" width="4" height="1" fill="#b4b28c"/><rect x="13" y="13" width="1" height="4" fill="#000"/></svg>
<div class="t b" style="left:254px;top:749px;font-size:12px;font-weight:bold;color:#000000;">MDC OPTIONS EVAL...</div>
<div style="left:785px;top:743px;width:237px;height:1px;background:#5f5f40"></div>
<div style="left:785px;top:743px;width:1px;height:24px;background:#5f5f40"></div>
<div style="left:785px;top:766px;width:237px;height:1px;background:#ffffff"></div>
<div style="left:1021px;top:743px;width:1px;height:24px;background:#ffffff"></div>
<div class="t" style="left:971px;top:749px;font-size:12px;font-weight:normal;color:#000000;letter-spacing:-0.9px">3:26 PM</div>
<svg style="left:791px;top:747px" width="16" height="16" viewBox="0 0 16 16"><path d="M1 2 L9 11" stroke="#000" stroke-width="3"/><path d="M1.5 2.5 L9 11" stroke="#fff" stroke-width="1.2"/><rect x="7" y="0" width="5" height="4" fill="#000"/><circle cx="10" cy="10" r="3" fill="#c00000" stroke="#000" stroke-width="0.8"/><rect x="8" y="5" width="3" height="2" fill="#807a30"/><rect x="0" y="14" width="16" height="2" fill="#008000"/></svg>
<svg style="left:808px;top:747px" width="16" height="16" viewBox="0 0 16 16"><rect x="1" y="4" width="13" height="10" fill="#fff" stroke="#000" stroke-width="1"/><rect x="4" y="4" width="10" height="2" fill="#000080"/><rect x="0.5" y="0.5" width="7" height="5" fill="#fff" stroke="#000" stroke-width="0.8"/><rect x="2" y="2" width="1.2" height="1.5" fill="#0000ff"/><rect x="5" y="2" width="1.2" height="1.5" fill="#0000ff"/><circle cx="11" cy="11" r="4.2" fill="#fff" stroke="#c00000" stroke-width="1.6"/><path d="M11 9 V11.5 H13" stroke="#000" stroke-width="1" fill="none"/></svg>
<svg style="left:825px;top:747px" width="16" height="16" viewBox="0 0 16 16"><path d="M0.5 4 L5 0.5 L15.5 10 L11 14.5 Z" fill="#6e6a30" stroke="#000" stroke-width="1"/><path d="M2 5 L5 2.5 L14 10.5" stroke="#9a9650" stroke-width="1" fill="none"/><rect x="8" y="12" width="6" height="1.5" fill="#e0d000"/><path d="M9 8.5 L11 9.5" stroke="#000080" stroke-width="1.2"/></svg>
<svg style="left:842px;top:747px" width="16" height="16" viewBox="0 0 16 16"><path d="M1 5 H4 L9 1 V15 L4 11 H1 Z" fill="#ffff80" stroke="#000" stroke-width="1"/><rect x="9" y="2" width="1.5" height="12" fill="#fff"/><path d="M12 4 L14 3 M12.5 8 H15 M12 12 L14 13" stroke="#8a8a70" stroke-width="0.8"/></svg>
<svg style="left:861px;top:747px" width="16" height="16" viewBox="0 0 16 16"><rect x="1" y="2" width="3" height="13" fill="#fff" stroke="#000" stroke-width="0.8"/><path d="M4 5 L7 8 L4 11 Z" fill="#e00000"/><path d="M8 3 L10 5 M9 7 H12 M8 12 L10 10 M10 2 L12 4 M10 13 L12 11" stroke="#a00000" stroke-width="1"/></svg>
<svg style="left:877px;top:747px" width="16" height="16" viewBox="0 0 16 16"><rect x="1" y="3" width="6" height="12" rx="1" fill="#000080" stroke="#000" stroke-width="0.8"/><rect x="2.5" y="4" width="1.5" height="10" fill="#fff"/><rect x="2" y="1.5" width="4" height="2" fill="#fff" stroke="#000" stroke-width="0.5"/><path d="M6 2 Q9 0 10 2 Q12 4 11 8 Q9 12 11 14" stroke="#e00000" stroke-width="1.3" fill="none"/></svg>
<svg style="left:893px;top:747px" width="16" height="16" viewBox="0 0 16 16"><circle cx="6" cy="5" r="4" fill="#fff" stroke="#000" stroke-width="1"/><path d="M6 2.5 V5 H8" stroke="#000" stroke-width="0.8" fill="none"/><ellipse cx="8" cy="12" rx="7" ry="3.5" fill="#e8e8d0" stroke="#000" stroke-width="1"/><text x="6" y="15" font-size="7" font-weight="bold" fill="#000040" font-family="Liberation Sans">P</text></svg>
<svg style="left:911px;top:747px" width="16" height="16" viewBox="0 0 16 16"><path d="M1 3 Q0 1 2 0 M14 0 Q16 1 15 3 M8 0 V4" stroke="#000" stroke-width="0.8" fill="none"/><rect x="3" y="4" width="10" height="8" fill="#00e000" stroke="#000" stroke-width="1"/><rect x="1" y="12" width="14" height="4" fill="#e0e0c0" stroke="#000" stroke-width="1"/><rect x="3" y="13.5" width="3" height="1" fill="#008000"/></svg>
<svg style="left:927px;top:747px" width="16" height="16" viewBox="0 0 16 16"><rect x="1" y="2" width="4" height="13" rx="1" fill="#000080" stroke="#000" stroke-width="0.7"/><rect x="2" y="3" width="1.5" height="11" fill="#fff"/><rect x="5.5" y="1.5" width="10" height="13" fill="#e8e4c8" stroke="#000" stroke-width="1"/><rect x="8" y="4" width="5" height="2" fill="#fff"/><rect x="9.5" y="8" width="2" height="2" fill="#e0e000"/><rect x="9.5" y="11" width="2" height="2" fill="#00c0e0"/></svg>
<svg style="left:944px;top:747px" width="16" height="16" viewBox="0 0 16 16"><path d="M8 1.5 A6.5 6.5 0 0 0 5 13.5" stroke="#e00000" stroke-width="1.8" fill="none"/><path d="M3 10 L5 13.5 L8.5 12" stroke="#e00000" stroke-width="1.5" fill="none"/><path d="M8 14.5 A6.5 6.5 0 0 0 11 2.5" stroke="#0000e0" stroke-width="1.8" fill="none"/><path d="M13 6 L11 2.5 L7.5 4" stroke="#0000e0" stroke-width="1.5" fill="none"/></svg>
</body></html>
